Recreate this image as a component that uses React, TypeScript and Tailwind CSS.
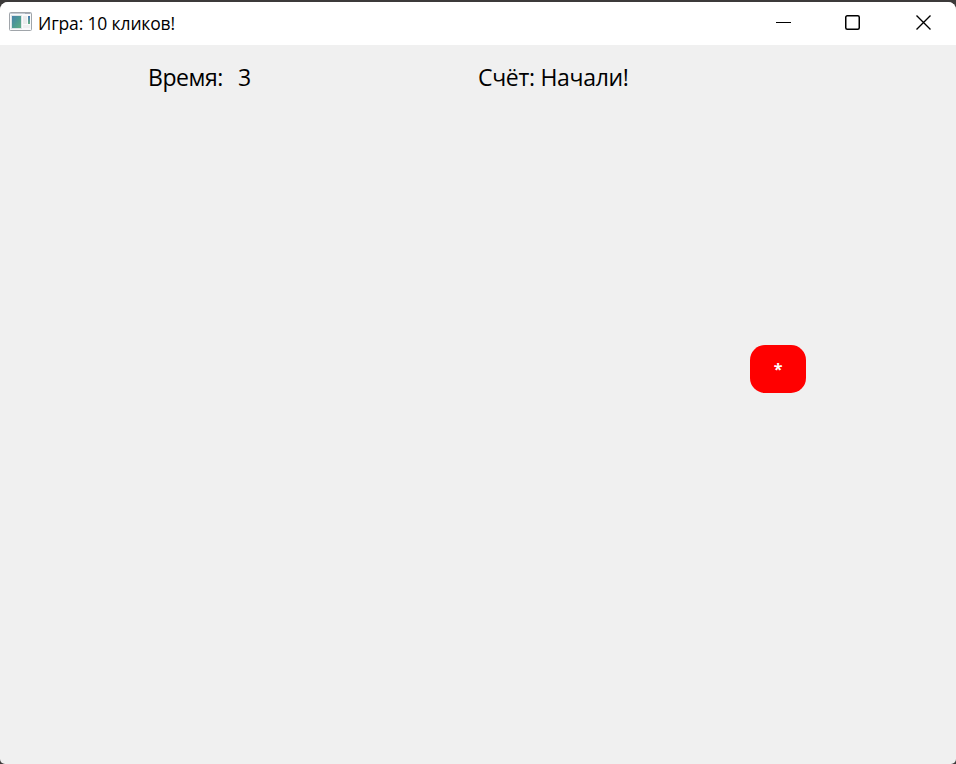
function AppIcon() {
  return (
    <svg className="block h-5 w-6 shrink-0" viewBox="0 0 24 20" fill="none">
      <defs>
        <linearGradient id="pane" x1="0" y1="0" x2="1" y2="1">
          <stop offset="0" stopColor="#4a7fae" />
          <stop offset="0.5" stopColor="#4c9a94" />
          <stop offset="1" stopColor="#62b080" />
        </linearGradient>
        <linearGradient id="strip" x1="0" y1="0" x2="0" y2="1">
          <stop offset="0" stopColor="#4677b5" />
          <stop offset="1" stopColor="#66b283" />
        </linearGradient>
      </defs>
      <rect x="0.5" y="0.5" width="22" height="18" rx="1" fill="#f9fafb" stroke="#a0a5aa" />
      <path d="M1 1.5h21" stroke="#c3cad4" />
      <path d="M16 1.5h5" stroke="#a3abb8" />
      <rect x="2.5" y="3.5" width="10" height="13" fill="url(#pane)" stroke="#dde5e8" />
      <rect x="14" y="4" width="4" height="8" fill="#e9ebec" />
      <rect x="19" y="4" width="2" height="8" fill="url(#strip)" />
      <rect x="14" y="13" width="7" height="3" fill="#eef0f1" />
    </svg>
  );
}

function TitleBar() {
  return (
    <header className="flex h-[43px] shrink-0 items-start bg-white pl-[9px]">
      <div className="pt-[10px]">
        <AppIcon />
      </div>
      <h1 className="ml-[5px] pt-[9px] text-[17.5px] leading-6 tracking-[-0.15px] whitespace-nowrap">Игра: 10 кликов!</h1>
      <div className="ml-auto flex pt-3 pr-6">
        <button aria-label="Свернуть" className="mr-[53px]">
          <svg className="block h-4 w-4" viewBox="0 0 16 16">
            <path d="M0 8.5h15" stroke="#000" />
          </svg>
        </button>
        <button aria-label="Развернуть" className="mr-[55px]">
          <svg className="block h-4 w-4" viewBox="0 0 16 16" fill="none">
            <rect x="0.75" y="1.75" width="13.5" height="13.5" rx="1.5" stroke="#000" strokeWidth="1.5" />
          </svg>
        </button>
        <button aria-label="Закрыть">
          <svg className="block h-4 w-4" viewBox="0 0 16 16" fill="none">
            <path d="M0.5 1.5l14 14M14.5 1.5l-14 14" stroke="#000" strokeWidth="1.4" />
          </svg>
        </button>
      </div>
    </header>
  );
}

export default function App() {
  return (
    <div className="h-[764px] w-[956px] overflow-hidden bg-[#3c3a3a] pt-[2px] font-['Open_Sans','Noto_Sans',sans-serif] text-black">
      <div className="flex h-[762px] flex-col overflow-hidden rounded-t-[8px] rounded-b-[5px] bg-[#f0f0f0]">
        <TitleBar />
        <main className="relative flex-1">
          <div className="flex pt-[16px] pl-[148px] text-[23px] leading-8 tracking-[-0.3px] whitespace-nowrap">
            <div className="flex w-[330px]">
              <span className="w-[90px] tracking-[-0.45px]">Время:</span>
              <span>3</span>
            </div>
            <span>Счёт: Начали!</span>
          </div>
          <button className="absolute top-[300px] left-[750px] h-12 w-14 rounded-[15px] bg-[#ff0000] text-[16px] leading-6 font-bold text-white">
            *
          </button>
        </main>
      </div>
    </div>
  );
}
